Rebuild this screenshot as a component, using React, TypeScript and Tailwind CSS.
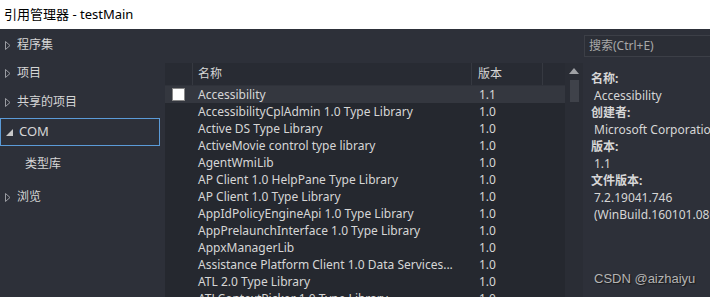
import React from 'react';

const rows: [string, string][] = [
  ['Accessibility', '1.1'],
  ['AccessibilityCplAdmin 1.0 Type Library', '1.0'],
  ['Active DS Type Library', '1.0'],
  ['ActiveMovie control type library', '1.0'],
  ['AgentWmiLib', '1.0'],
  ['AP Client 1.0 HelpPane Type Library', '1.0'],
  ['AP Client 1.0 Type Library', '1.0'],
  ['AppIdPolicyEngineApi 1.0 Type Library', '1.0'],
  ['AppPrelaunchInterface 1.0 Type Library', '1.0'],
  ['AppxManagerLib', '1.0'],
  ['Assistance Platform Client 1.0 Data Services...', '1.0'],
  ['ATL 2.0 Type Library', '1.0'],
  ['ATLContextPicker 1.0 Type Library', '1.0'],
];

const Caret = () => (
  <svg width="6" height="9" viewBox="0 0 6 9" className="shrink-0">
    <path d="M0.5 0.5 L5 4.5 L0.5 8.5 Z" fill="none" stroke="#9a9ca2" strokeWidth="1" />
  </svg>
);

const Expanded = () => (
  <svg width="7" height="7" viewBox="0 0 7 7" className="shrink-0">
    <path d="M7 0 L7 7 L0 7 Z" fill="#c8c8c8" />
  </svg>
);

const NavItem = ({ label, h }: { label: string; h: string }) => (
  <div className={`flex items-center gap-[6px] pl-[5px] ${h}`}>
    <Caret />
    <span>{label}</span>
  </div>
);

const App = () => {
  return (
    <div
      className="w-[710px] h-[297px] overflow-hidden bg-[#2d3039] text-[12px] text-[#d6d6d6]"
      style={{ fontFamily: '"Noto Sans", "Noto Sans CJK SC", sans-serif' }}
    >
      {/* Title bar */}
      <div className="h-[29px] bg-white flex items-center pl-[4px] text-[13px] text-black">
        引用管理器 - testMain
      </div>

      <div className="flex h-[268px]">
        {/* Left nav */}
        <div className="w-[160px] shrink-0 pt-[2px]">
          <NavItem label="程序集" h="h-[28px]" />
          <NavItem label="项目" h="h-[28px]" />
          <NavItem label="共享的项目" h="h-[30px]" />
          <div className="h-[28px] flex items-center gap-[6px] pl-[5px] border border-[#5b9bd8] mt-[1px]">
            <Expanded />
            <span className="text-[13px]">COM</span>
          </div>
          <div className="h-[36px] flex items-center pl-[25px]">类型库</div>
          <NavItem label="浏览" h="h-[30px]" />
        </div>

        {/* List */}
        <div className="ml-[5px] mt-[34px] w-[400px] shrink-0 bg-[#25282f]">
          <div className="h-[23px] flex bg-[#282b33] border-b border-[#2f323a]">
            <div className="w-[28px] border-r border-[#363941]" />
            <div className="w-[279px] pl-[5px] flex items-center border-r border-[#363941]">名称</div>
            <div className="w-[71px] pl-[6px] flex items-center border-r border-[#363941]">版本</div>
          </div>
          {rows.map(([name, ver], i) => (
            <div key={i} className={`h-[17px] flex items-center ${i === 0 ? 'bg-[#34373f]' : ''}`}>
              <div className="w-[28px] flex items-center pl-[7px]">
                {i === 0 && <div className="w-[13px] h-[13px] bg-white border border-[#888]" />}
              </div>
              <div className="w-[280px] pl-[5px] whitespace-nowrap overflow-hidden">{name}</div>
              <div className="pl-[6px]">{ver}</div>
            </div>
          ))}
        </div>

        {/* Scrollbar */}
        <div className="mt-[34px] w-[18px] shrink-0 bg-[#2a2d35] flex flex-col items-center">
          <svg width="10" height="6" viewBox="0 0 10 6" className="mt-[5px]">
            <path d="M0 6 L5 0 L10 6 Z" fill="#a0a2a6" />
          </svg>
          <div className="mt-[6px] w-[9px] h-[22px] bg-[#3f424a]" />
        </div>

        {/* Right panel */}
        <div className="flex-1 pl-[1px] pt-[6px] relative">
          <div className="h-[22px] border border-[#3c3f47] bg-[#2b2e36] flex items-center pl-[4px] text-[#a8a8a8]">
            搜索(Ctrl+E)
          </div>
          <div className="pl-[7px] pt-[13px] leading-[17px] whitespace-nowrap">
            <div className="font-bold">名称:</div>
            <div className="pl-[3px]">Accessibility</div>
            <div className="font-bold">创建者:</div>
            <div className="pl-[3px]">Microsoft Corporation</div>
            <div className="font-bold">版本:</div>
            <div className="pl-[3px]">1.1</div>
            <div className="font-bold">文件版本:</div>
            <div className="pl-[3px]">7.2.19041.746</div>
            <div className="pl-[3px]">(WinBuild.160101.0800)</div>
          </div>
          <div
            className="absolute left-[11px] top-[240px] text-[13px] text-[#b4b4b4] whitespace-nowrap [text-shadow:1px_1px_1px_#1a1a1a]"
            style={{ fontFamily: '"Liberation Sans", sans-serif' }}
          >
            CSDN @aizhaiyu
          </div>
        </div>
      </div>
    </div>
  );
};

export default App;
